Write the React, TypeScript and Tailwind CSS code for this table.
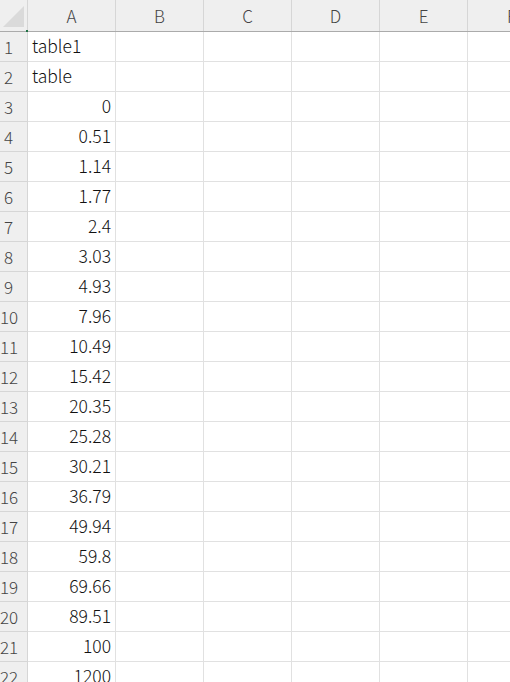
import React from "react";

const cols = ["A", "B", "C", "D", "E", "F"];
const rows: string[] = [
  "table1",
  "table",
  "0",
  "0.51",
  "1.14",
  "1.77",
  "2.4",
  "3.03",
  "4.93",
  "7.96",
  "10.49",
  "15.42",
  "20.35",
  "25.28",
  "30.21",
  "36.79",
  "49.94",
  "59.8",
  "69.66",
  "89.51",
  "100",
  "1200",
];

export default function App() {
  const font = { fontFamily: '"Noto Sans CJK JP", "Noto Sans", sans-serif' };
  return (
    <div className="w-[510px] h-[682px] overflow-hidden bg-white" style={font}>
      <div className="flex h-[32px] bg-[#efefef] border-b border-[#ababab]">
        <div className="relative w-[28px] shrink-0 border-r border-[#d6d6d6]">
          <div className="absolute left-[3px] top-[6px] w-0 h-0 border-l-[21px] border-l-transparent border-b-[21px] border-b-[#dadada]" />
          <div className="absolute right-[-1px] bottom-[-1px] w-[2px] h-[2px] bg-[#217346]" />
        </div>
        {cols.map((c) => (
          <div
            key={c}
            className="w-[88px] shrink-0 border-r border-[#d6d6d6] flex items-center justify-center text-[17px] font-light text-[#444] leading-none pb-[1px]"
          >
            {c}
          </div>
        ))}
      </div>
      {rows.map((v, i) => {
        const isText = i < 2;
        return (
          <div key={i} className="flex h-[30px]">
            <div className="w-[28px] shrink-0 bg-[#efefef] border-r border-[#d6d6d6] border-b border-b-[#d6d6d6] flex items-center pb-[1px]">
              <div className="w-[17px] text-center text-[17px] font-light text-[#444] leading-none">{i + 1}</div>
            </div>
            <div
              className={`w-[88px] shrink-0 border-r border-b border-[#e1e1e1] flex items-center text-[17.5px] font-light text-[#111] leading-none pb-[1px] ${
                isText ? "justify-start pl-[4px]" : "justify-end pr-[4px]"
              }`}
            >
              {v}
            </div>
            {cols.slice(1).map((c) => (
              <div key={c} className="w-[88px] shrink-0 border-r border-b border-[#e1e1e1]" />
            ))}
          </div>
        );
      })}
    </div>
  );
}
